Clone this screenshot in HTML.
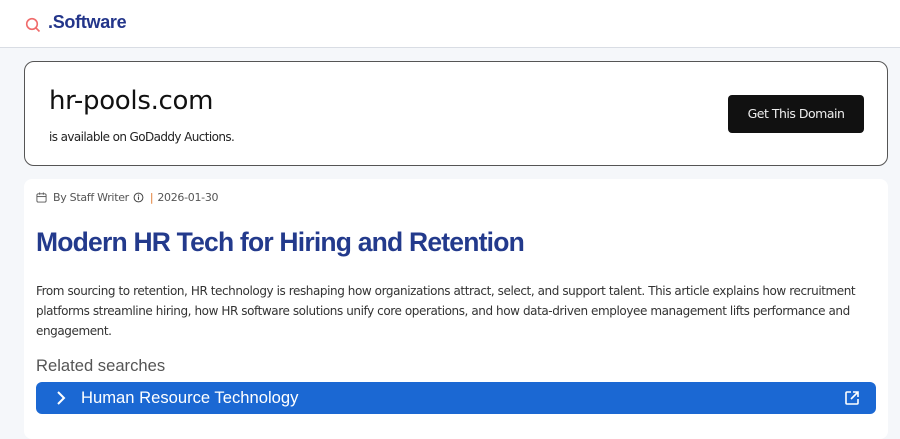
<!DOCTYPE html>
<html><head><meta charset="utf-8"><style>
*{margin:0;padding:0;box-sizing:border-box}
body{width:900px;height:420px;overflow:hidden;background:#f5f7fa;font-family:"Liberation Sans",sans-serif;position:relative}
.hdr{position:absolute;left:0;top:0;width:900px;height:48px;background:#fff;border-bottom:1px solid #d9dde4}
.logo{position:absolute;left:48px;top:12px;font-size:18px;font-weight:bold;color:#23358a;letter-spacing:-0.3px}
.dc{position:absolute;left:24px;top:61px;width:864px;height:105px;background:#fff;border:1px solid #555;border-radius:10px}
.dn{position:absolute;left:24px;top:24px;font-size:26px;color:#111;font-family:"DejaVu Sans",sans-serif;letter-spacing:-0.3px}
.da{position:absolute;left:24px;top:68px;font-size:12px;color:#222;font-family:"DejaVu Sans",sans-serif;letter-spacing:-0.6px}
.btn{position:absolute;left:703px;top:33px;width:136px;height:38px;background:#111;border-radius:4px;color:#eee;font-size:12.5px;font-family:"DejaVu Sans",sans-serif;letter-spacing:-0.5px;text-align:center;line-height:38px}
.ac{position:absolute;left:24px;top:179px;width:864px;height:260px;background:#fff;border-radius:8px}
.meta{position:absolute;left:12px;top:12px;font-size:11px;color:#555;font-family:"DejaVu Sans",sans-serif;letter-spacing:-0.3px;display:flex;align-items:center;gap:4px}
h1{position:absolute;left:12px;top:48px;font-size:26.5px;color:#233a8c;font-weight:bold;letter-spacing:-0.8px}
.p{position:absolute;left:12px;top:102px;width:830px;font-size:12px;line-height:20px;color:#333;font-family:"DejaVu Sans",sans-serif;letter-spacing:-0.42px}
.rs{position:absolute;left:12px;top:177px;font-size:16.6px;color:#555}
.bar{position:absolute;left:12px;top:203px;width:840px;height:32px;background:#1b68d3;border-radius:6px;color:#fff;font-size:16.6px;line-height:32px}
</style></head><body>
<div class="hdr">
<svg style="position:absolute;left:25px;top:17px" width="16" height="16" viewBox="0 0 16 16"><circle cx="7" cy="7" r="5.3" fill="none" stroke="#f06b6b" stroke-width="1.6"/><line x1="11" y1="11" x2="14.5" y2="14.5" stroke="#f06b6b" stroke-width="1.6"/></svg>
<div class="logo">.Software</div></div>
<div class="dc"><div class="dn">hr-pools.com</div><div class="da">is available on GoDaddy Auctions.</div><div class="btn">Get This Domain</div></div>
<div class="ac">
<div class="meta"><svg width="11" height="11" viewBox="0 0 12 12"><rect x="1" y="2" width="10" height="9" rx="1.5" fill="none" stroke="#555" stroke-width="1"/><line x1="1" y1="5" x2="11" y2="5" stroke="#555"/><line x1="4" y1="0.5" x2="4" y2="3" stroke="#555"/><line x1="8" y1="0.5" x2="8" y2="3" stroke="#555"/></svg><span style="margin-left:2px">By Staff Writer</span><svg width="11" height="11" viewBox="0 0 12 12"><circle cx="6" cy="6" r="4.8" fill="none" stroke="#444" stroke-width="1.1"/><line x1="6" y1="5" x2="6" y2="8.5" stroke="#444" stroke-width="1.2"/><circle cx="6" cy="3.4" r=".7" fill="#444"/></svg><span style="color:#e07a2f;margin-left:2px">|</span><span>2026-01-30</span></div>
<h1>Modern HR Tech for Hiring and Retention</h1>
<div class="p">From sourcing to retention, HR technology is reshaping how organizations attract, select, and support talent. This article explains how recruitment platforms streamline hiring, how HR software solutions unify core operations, and how data-driven employee management lifts performance and engagement.</div>
<div class="rs">Related searches</div>
<div class="bar"><svg style="position:absolute;left:20px;top:9px" width="10" height="14" viewBox="0 0 10 14"><path d="M2 1l6 6-6 6" fill="none" stroke="#fff" stroke-width="2"/></svg><span style="position:absolute;left:45px">Human Resource Technology</span><svg style="position:absolute;left:808px;top:8px" width="16" height="16" viewBox="0 0 16 16"><path d="M7 2H3a1 1 0 0 0-1 1v10a1 1 0 0 0 1 1h10a1 1 0 0 0 1-1V9" fill="none" stroke="#fff" stroke-width="1.6"/><path d="M9 2h5v5M14 2L7 9" fill="none" stroke="#fff" stroke-width="1.6"/></svg></div>
</div>
</body></html>
